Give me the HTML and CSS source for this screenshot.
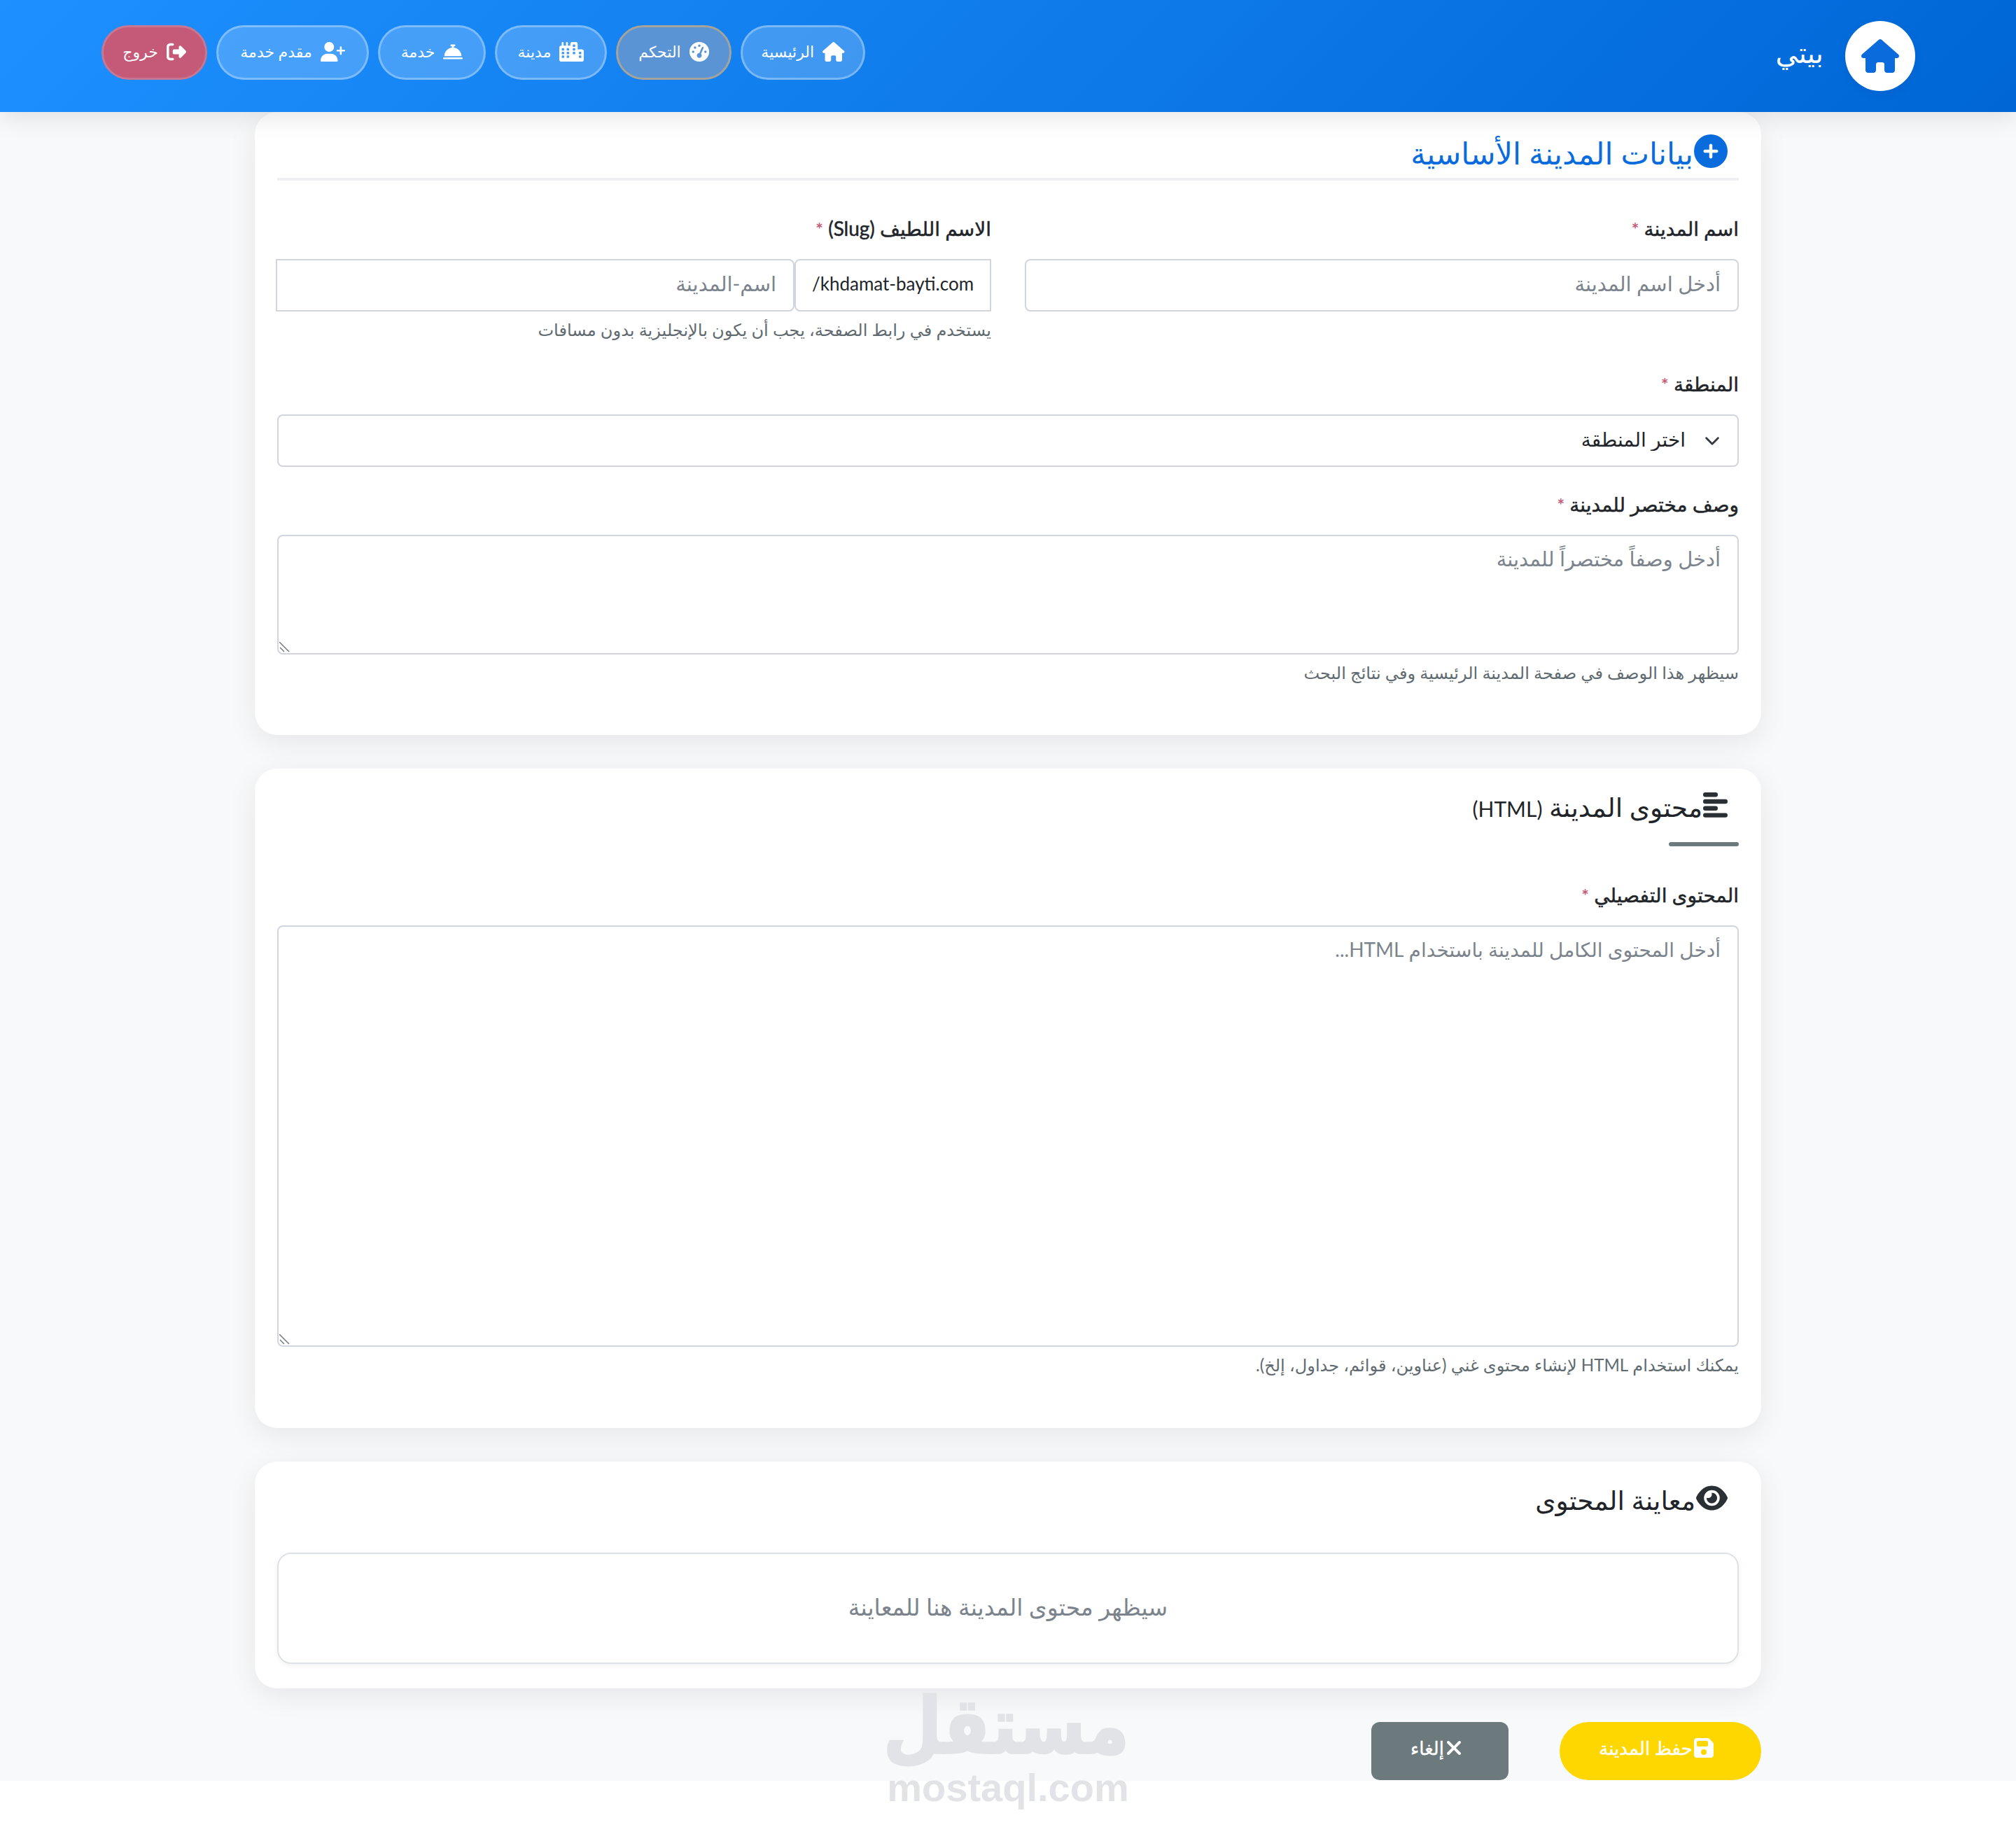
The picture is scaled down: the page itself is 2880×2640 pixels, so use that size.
FILE: index.html
```html
<!DOCTYPE html>
<html lang="ar" dir="rtl">
<head>
<meta charset="utf-8">
<title>بيتي</title>
<link rel="stylesheet" href="styles.css">
</head>
<body>
<header class="topbar">
  <a class="brand">
    <span class="brand-logo"><svg viewBox="0 0 576 512"><path d="M575.8 255.5c0 18-15 32.1-32 32.1h-32l.7 160.2c0 2.7-.2 5.4-.5 8.1V472c0 22.1-17.9 40-40 40H456c-1.1 0-2.2 0-3.3-.1c-1.4 .1-2.8 .1-4.2 .1H416 392c-22.1 0-40-17.9-40-40V448 384c0-17.7-14.3-32-32-32H256c-17.7 0-32 14.3-32 32v64 24c0 22.1-17.9 40-40 40H160 128.1c-1.5 0-3-.1-4.5-.2c-1.2 .1-2.4 .2-3.6 .2H104c-22.1 0-40-17.9-40-40V360c0-.9 0-1.9 .1-2.8V287.6H32c-18 0-32-14-32-32.1c0-9 3-17 10-24L266.4 8c7-7 15-8 22-8s15 2 21 7L564.8 231.5c8 7 12 15 11 24z"/></svg></span>
    <span class="brand-name">بيتي</span>
  </a>
  <nav class="nav">
    <a class="pill pill-home"><svg viewBox="0 0 576 512"><path d="M575.8 255.5c0 18-15 32.1-32 32.1h-32l.7 160.2c0 2.7-.2 5.4-.5 8.1V472c0 22.1-17.9 40-40 40H456c-1.1 0-2.2 0-3.3-.1c-1.4 .1-2.8 .1-4.2 .1H416 392c-22.1 0-40-17.9-40-40V448 384c0-17.7-14.3-32-32-32H256c-17.7 0-32 14.3-32 32v64 24c0 22.1-17.9 40-40 40H160 128.1c-1.5 0-3-.1-4.5-.2c-1.2 .1-2.4 .2-3.6 .2H104c-22.1 0-40-17.9-40-40V360c0-.9 0-1.9 .1-2.8V287.6H32c-18 0-32-14-32-32.1c0-9 3-17 10-24L266.4 8c7-7 15-8 22-8s15 2 21 7L564.8 231.5c8 7 12 15 11 24z"/></svg><span>الرئيسية</span></a>
    <a class="pill pill-active"><svg viewBox="0 0 512 512"><path d="M0 256a256 256 0 1 1 512 0A256 256 0 1 1 0 256zM288 96a32 32 0 1 0 -64 0 32 32 0 1 0 64 0zM256 416c35.3 0 64-28.7 64-64c0-17.4-6.9-33.1-18.1-44.6L366 161.7c5.3-12.1-.2-26.3-12.3-31.6s-26.3 .2-31.6 12.3L257.9 288c-.6 0-1.3 0-1.9 0c-35.3 0-64 28.7-64 64s28.7 64 64 64zM176 144a32 32 0 1 0 -64 0 32 32 0 1 0 64 0zM96 288a32 32 0 1 0 0-64 32 32 0 1 0 0 64zm352-32a32 32 0 1 0 -64 0 32 32 0 1 0 64 0z"/></svg><span>التحكم</span></a>
    <a class="pill pill-city"><svg viewBox="0 0 640 512"><path d="M480 48c0-26.5-21.5-48-48-48H336c-26.5 0-48 21.5-48 48V96H224V24c0-13.3-10.7-24-24-24s-24 10.7-24 24V96H112V24c0-13.3-10.7-24-24-24S64 10.7 64 24V96H48C21.5 96 0 117.5 0 144v96V464c0 26.5 21.5 48 48 48H304h32 96H592c26.5 0 48-21.5 48-48V240c0-26.5-21.5-48-48-48H480V48zm96 320v32c0 8.8-7.2 16-16 16H528c-8.8 0-16-7.2-16-16V368c0-8.8 7.2-16 16-16h32c8.8 0 16 7.2 16 16zM240 416H208c-8.8 0-16-7.2-16-16V368c0-8.8 7.2-16 16-16h32c8.8 0 16 7.2 16 16v32c0 8.8-7.2 16-16 16zM128 400c0 8.8-7.2 16-16 16H80c-8.8 0-16-7.2-16-16V368c0-8.8 7.2-16 16-16h32c8.8 0 16 7.2 16 16v32zM560 256c8.8 0 16 7.2 16 16v32c0 8.8-7.2 16-16 16H528c-8.8 0-16-7.2-16-16V272c0-8.8 7.2-16 16-16h32zM256 176v32c0 8.8-7.2 16-16 16H208c-8.8 0-16-7.2-16-16V176c0-8.8 7.2-16 16-16h32c8.8 0 16 7.2 16 16zM112 160c8.8 0 16 7.2 16 16v32c0 8.8-7.2 16-16 16H80c-8.8 0-16-7.2-16-16V176c0-8.8 7.2-16 16-16h32zM256 304c0 8.8-7.2 16-16 16H208c-8.8 0-16-7.2-16-16V272c0-8.8 7.2-16 16-16h32c8.8 0 16 7.2 16 16v32zM112 320H80c-8.8 0-16-7.2-16-16V272c0-8.8 7.2-16 16-16h32c8.8 0 16 7.2 16 16v32c0 8.8-7.2 16-16 16zm304-48v32c0 8.8-7.2 16-16 16H368c-8.8 0-16-7.2-16-16V272c0-8.8 7.2-16 16-16h32c8.8 0 16 7.2 16 16zM400 64c8.8 0 16 7.2 16 16v32c0 8.8-7.2 16-16 16H368c-8.8 0-16-7.2-16-16V80c0-8.8 7.2-16 16-16h32zm16 112v32c0 8.8-7.2 16-16 16H368c-8.8 0-16-7.2-16-16V176c0-8.8 7.2-16 16-16h32c8.8 0 16 7.2 16 16z"/></svg><span>مدينة</span></a>
    <a class="pill pill-service"><svg viewBox="0 0 512 512"><path d="M216 64c-13.3 0-24 10.7-24 24s10.7 24 24 24h16v33.3C119.6 157.2 32 252.4 32 368H480c0-115.6-87.6-210.8-200-222.7V112h16c13.3 0 24-10.7 24-24s-10.7-24-24-24H256 216zM24 400c-13.3 0-24 10.7-24 24s10.7 24 24 24H488c13.3 0 24-10.7 24-24s-10.7-24-24-24H24z"/></svg><span>خدمة</span></a>
    <a class="pill pill-provider"><svg viewBox="0 0 640 512"><path d="M96 128a128 128 0 1 1 256 0A128 128 0 1 1 96 128zM0 482.3C0 383.8 79.8 304 178.3 304h91.4C368.2 304 448 383.8 448 482.3c0 16.4-13.3 29.7-29.7 29.7H29.7C13.3 512 0 498.7 0 482.3zM504 312V248H440c-13.3 0-24-10.7-24-24s10.7-24 24-24h64V136c0-13.3 10.7-24 24-24s24 10.7 24 24v64h64c13.3 0 24 10.7 24 24s-10.7 24-24 24H552v64c0 13.3-10.7 24-24 24s-24-10.7-24-24z"/></svg><span>مقدم خدمة</span></a>
    <a class="pill pill-exit"><svg viewBox="0 0 512 512"><path d="M377.9 105.9L500.7 228.7c7.2 7.2 11.3 17.1 11.3 27.3s-4.1 20.1-11.3 27.3L377.9 406.1c-6.4 6.4-15 9.9-24 9.9c-18.7 0-33.9-15.2-33.9-33.9l0-62.1-128 0c-17.7 0-32-14.3-32-32l0-64c0-17.7 14.3-32 32-32l128 0 0-62.1c0-18.7 15.2-33.9 33.9-33.9c9 0 17.6 3.6 24 9.9zM160 96L96 96c-17.7 0-32 14.3-32 32l0 256c0 17.7 14.3 32 32 32l64 0c17.7 0 32 14.3 32 32s-14.3 32-32 32l-64 0c-53 0-96-43-96-96L0 128C0 75 43 32 96 32l64 0c17.7 0 32 14.3 32 32s-14.3 32-32 32z"/></svg><span>خروج</span></a>
  </nav>
</header>

<main class="page">
  <section class="card card-basic">
    <h2 class="head head-primary">
      <svg class="head-icon icon-plus" viewBox="0 0 512 512"><path d="M256 512A256 256 0 1 0 256 0a256 256 0 1 0 0 512zM232 344V280H168c-13.3 0-24-10.7-24-24s10.7-24 24-24h64V168c0-13.3 10.7-24 24-24s24 10.7 24 24v64h64c13.3 0 24 10.7 24 24s-10.7 24-24 24H280v64c0 13.3-10.7 24-24 24s-24-10.7-24-24z"/></svg>
      <span>بيانات المدينة الأساسية</span>
    </h2>
    <div class="two-cols">
      <div class="field">
        <label class="label">اسم المدينة <b class="req">*</b></label>
        <input class="control" type="text" placeholder="أدخل اسم المدينة">
      </div>
      <div class="field">
        <label class="label">الاسم اللطيف (Slug) <b class="req">*</b></label>
        <div class="input-group">
          <span class="addon">khdamat-bayti.com/</span>
          <input class="control group-input" type="text" placeholder="اسم-المدينة">
        </div>
        <p class="help">يستخدم في رابط الصفحة، يجب أن يكون بالإنجليزية بدون مسافات</p>
      </div>
    </div>
    <div class="field field-region">
      <label class="label">المنطقة <b class="req">*</b></label>
      <div class="select-wrap">
        <select class="control select"><option>اختر المنطقة</option></select>
        <svg class="chevron" viewBox="0 0 16 16"><path d="M2 5l6 6 6-6" fill="none" stroke="#343a40" stroke-width="2" stroke-linecap="round" stroke-linejoin="round"/></svg>
      </div>
    </div>
    <div class="field field-desc">
      <label class="label">وصف مختصر للمدينة <b class="req">*</b></label>
      <div class="area-wrap">
        <textarea class="control area area-short" placeholder="أدخل وصفاً مختصراً للمدينة"></textarea>
        <svg class="grip" viewBox="0 0 15 15"><path d="M0 0l14 14M1 8l6 6" fill="none" stroke="#6c757d" stroke-width="1.4"/></svg>
      </div>
      <p class="help">سيظهر هذا الوصف في صفحة المدينة الرئيسية وفي نتائج البحث</p>
    </div>
  </section>

  <section class="card card-content">
    <h2 class="head head-plain">
      <svg class="head-icon icon-lines" viewBox="0 0 35 36"><rect x="0" y="0" width="21" height="6.4" rx="3.2"/><rect x="0" y="9.8" width="35" height="6.4" rx="3.2"/><rect x="0" y="19.6" width="21" height="6.4" rx="3.2"/><rect x="0" y="29.4" width="35" height="6.4" rx="3.2"/></svg>
      <span>محتوى المدينة <span class="latin">(HTML)</span></span>
    </h2>
    <div class="head-rule"></div>
    <div class="field">
      <label class="label">المحتوى التفصيلي <b class="req">*</b></label>
      <div class="area-wrap">
        <textarea class="control area area-tall" placeholder="أدخل المحتوى الكامل للمدينة باستخدام HTML..."></textarea>
        <svg class="grip" viewBox="0 0 15 15"><path d="M0 0l14 14M1 8l6 6" fill="none" stroke="#6c757d" stroke-width="1.4"/></svg>
      </div>
      <p class="help">يمكنك استخدام HTML لإنشاء محتوى غني (عناوين، قوائم، جداول، إلخ).</p>
    </div>
  </section>

  <section class="card card-preview">
    <h2 class="head head-plain">
      <svg class="head-icon icon-eye" viewBox="0 0 576 512"><path d="M288 32c-80.8 0-145.5 36.8-192.6 80.6C48.6 156 17.3 208 2.5 243.7c-3.3 7.9-3.3 16.7 0 24.6C17.3 304 48.6 356 95.4 399.4C142.5 443.2 207.2 480 288 480s145.5-36.8 192.6-80.6c46.8-43.5 78.1-95.4 93-131.1c3.3-7.9 3.3-16.7 0-24.6c-14.9-35.7-46.2-87.7-93-131.1C433.5 68.8 368.8 32 288 32zM144 256a144 144 0 1 1 288 0 144 144 0 1 1 -288 0zm144-64c0 35.3-28.7 64-64 64c-7.1 0-13.9-1.2-20.3-3.3c-5.5-1.8-11.9 1.6-11.7 7.4c.3 6.9 1.3 13.8 3.2 20.7c13.7 51.2 66.4 81.6 117.6 67.9s81.6-66.4 67.9-117.6c-11.1-41.5-47.8-69.4-88.6-71.1c-5.8-.2-9.2 6.1-7.4 11.7c2.1 6.4 3.3 13.2 3.3 20.3z"/></svg>
      <span>معاينة المحتوى</span>
    </h2>
    <div class="preview">سيظهر محتوى المدينة هنا للمعاينة</div>
  </section>

  <div class="actions">
    <button class="btn btn-save"><svg viewBox="0 0 448 512"><path d="M64 32C28.7 32 0 60.7 0 96V416c0 35.3 28.7 64 64 64H384c35.3 0 64-28.7 64-64V173.3c0-17-6.7-33.3-18.7-45.3L352 50.7C340 38.7 323.7 32 306.7 32H64zm0 96c0-17.7 14.3-32 32-32H288c17.7 0 32 14.3 32 32v64c0 17.7-14.3 32-32 32H96c-17.7 0-32-14.3-32-32V128zM224 288a64 64 0 1 1 0 128 64 64 0 1 1 0-128z"/></svg><span>حفظ المدينة</span></button>
    <button class="btn btn-cancel"><svg viewBox="0 0 384 512"><path d="M342.6 150.6c12.5-12.5 12.5-32.8 0-45.3s-32.8-12.5-45.3 0L192 210.7 86.6 105.4c-12.5-12.5-32.8-12.5-45.3 0s-12.5 32.8 0 45.3L146.7 256 41.4 361.4c-12.5 12.5-12.5 32.8 0 45.3s32.8 12.5 45.3 0L192 301.3 297.4 406.6c12.5 12.5 32.8 12.5 45.3 0s12.5-32.8 0-45.3L237.3 256 342.6 150.6z"/></svg><span>إلغاء</span></button>
  </div>
</main>

<div class="watermark">
  <div class="wm-ar">مستقل</div>
  <div class="wm-en">mostaql.com</div>
</div>
</body>
</html>
```

FILE: styles.css
```css
* { box-sizing: border-box; }
html, body { margin: 0; padding: 0; }
body {
  position: relative;
  width: 2880px;
  height: 2640px;
  overflow: hidden;
  background: #fff;
  color: #212529;
  font-family: "Lato", "DejaVu Sans", sans-serif;
}
.topbar {
  position: relative;
  z-index: 2;
  height: 160px;
  padding: 30px 144px 0 145px;
  display: flex;
  justify-content: space-between;
  align-items: flex-start;
  background: linear-gradient(135deg, #1e90ff 0%, #0066d6 100%);
  box-shadow: 0 8px 32px rgba(0, 0, 0, .1);
}
.brand { display: flex; align-items: center; gap: 31px; color: #fff; }
.brand-logo {
  width: 100px;
  height: 100px;
  border-radius: 50%;
  background: #fff;
  display: flex;
  align-items: center;
  justify-content: center;
  box-shadow: 0 4px 16px rgba(0, 0, 0, .05);
}
.brand-logo svg { width: 54px; height: 48px; fill: #0a6cdc; }
.brand-name { font-size: 40px; line-height: 90px; height: 100px; }
.nav { display: flex; gap: 13px; margin-top: 6px; }
.pill {
  height: 78px;
  padding: 0 0 3px;
  display: flex;
  align-items: center;
  justify-content: center;
  gap: 12px;
  border: 3px solid rgba(255, 255, 255, .3);
  border-radius: 39px;
  background: rgba(255, 255, 255, .2);
  color: #fff;
  font-size: 22px;
  font-weight: 500;
}
.pill svg { height: 28px; width: auto; max-width: 36px; fill: #fff; flex: none; }
.pill-home { width: 178px; }
.pill-active { width: 165px; background: #5a94d4; border-color: #a5a39a; }
.pill-city { width: 160px; }
.pill-service { width: 154px; }
.pill-provider { width: 218px; }
.pill-exit { width: 151px; background: #c45a78; border-color: #c77792; }

.page {
  height: 2384px;
  padding: 0 364px;
  background: #f8f9fa;
}
.card {
  background: #fff;
  border-radius: 32px;
  padding: 32px;
  box-shadow: 0 10px 40px rgba(0, 0, 0, .08);
  margin-bottom: 48px;
}
.card-basic { height: 890px; }
.card-content { height: 942px; }
.card-preview { height: 324px; }

.head {
  margin: 0;
  padding: 0 16px;
  display: flex;
  align-items: flex-start;
  gap: 1px;
  font-weight: 400;
  font-size: 37.5px;
  line-height: 48px;
}
.head-primary {
  color: #0a6cdc;
  font-size: 43px;
  height: 66px;
  border-bottom: 4px solid #eeeff0;
  margin-bottom: 50px;
}
.head-primary span { margin-top: 3px; }
.head-plain { height: 48px; color: #212529; }
.head-plain > span { margin-top: -1px; }
.latin { font-size: 30px; }
.head-icon { flex: none; }
.icon-plus { width: 48px; height: 48px; fill: #0a6cdc; }
.icon-lines { width: 35px; height: 36px; fill: #2b3035; margin-top: 2px; }
.icon-eye { width: 45px; height: 40px; fill: #2b3035; }
.head-rule {
  width: 100px;
  height: 6px;
  border-radius: 3px;
  background: #6c7a7d;
  margin: 25px 0 51px;
}

.two-cols { display: grid; grid-template-columns: 1fr 1fr; gap: 48px; }
.field { display: flex; flex-direction: column; }
.field-region { margin-top: 43px; }
.field-desc { margin-top: 35px; }
.label {
  display: block;
  height: 36px;
  line-height: 36px;
  margin-bottom: 26px;
  font-size: 28px;
  font-weight: 400;
  -webkit-text-stroke: .5px #212529;
  color: #212529;
}
.req { color: #c45a78; -webkit-text-stroke: 0; font-size: 25px; }
.control {
  display: block;
  width: 100%;
  height: 75px;
  padding: 0 24px 6px;
  border: 2px solid #d0d5de;
  border-radius: 8px;
  background: #fff;
  font-family: inherit;
  font-size: 29px;
  color: #212529;
  outline: none;
}
.control::placeholder { color: #7b848c; opacity: 1; }
.input-group { display: flex; margin-left: -2px; }
.addon {
  flex: none;
  width: 281px;
  height: 75px;
  display: flex;
  align-items: center;
  justify-content: center;
  padding-bottom: 5px;
  border: 2px solid #d0d5de;
  border-radius: 8px 0 0 8px;
  font-size: 26px;
  color: #212529;
}
.group-input { flex: 1; width: auto; border-radius: 0 8px 8px 0; }
.help {
  margin: 9px 0 0;
  height: 33px;
  line-height: 33px;
  font-size: 24.1px;
  color: #5f6b70;
}
.select-wrap { position: relative; }
.select { appearance: none; padding-right: 74px; font-size: 28px; }
.chevron { position: absolute; right: 30px; top: 30px; width: 16px; height: 16px; pointer-events: none; transform: scale(1.4); }
.area-wrap { position: relative; }
.area { padding: 14px 24px; line-height: 36px; resize: none; }
.area-short { height: 171px; }
.area-tall { height: 602px; font-size: 28px; }
.grip { position: absolute; left: 3px; bottom: 3px; width: 15px; height: 15px; pointer-events: none; }

.preview {
  margin-top: 50px;
  height: 159px;
  display: flex;
  align-items: center;
  justify-content: center;
  padding-bottom: 4px;
  border: 2px solid #dee2e6;
  border-radius: 20px;
  box-shadow: 0 2px 8px rgba(0, 0, 0, .05);
  font-size: 33px;
  color: #7b848c;
}

.actions { display: flex; gap: 73px; }
.btn {
  height: 83px;
  display: flex;
  align-items: center;
  justify-content: center;
  gap: 2px;
  border: 0;
  color: #fff;
  font-family: inherit;
  font-size: 26px;
  font-weight: 400;
  -webkit-text-stroke: .4px #fff;
}
.btn svg { height: 32px; width: auto; fill: #fff; }
.btn-save { width: 288px; padding: 0 12px 9px 0; background: #ffd700; border-radius: 42px; }
.btn-cancel { width: 196px; padding: 0 10px 9px 0; background: #6c7a7d; border-radius: 12px; }

.watermark {
  position: absolute;
  left: 1267px;
  top: 2413px;
  width: 346px;
  text-align: center;
  color: #e1e3e6;
  pointer-events: none;
}
.wm-ar { font-size: 96px; font-weight: 700; line-height: 113px; height: 113px; transform: scaleY(1.15); transform-origin: 50% 100%; -webkit-text-stroke: 3px #e1e3e6; }
.wm-en { font-family: "Liberation Sans", sans-serif; font-size: 56px; font-weight: 700; line-height: 56px; direction: ltr; }
```
